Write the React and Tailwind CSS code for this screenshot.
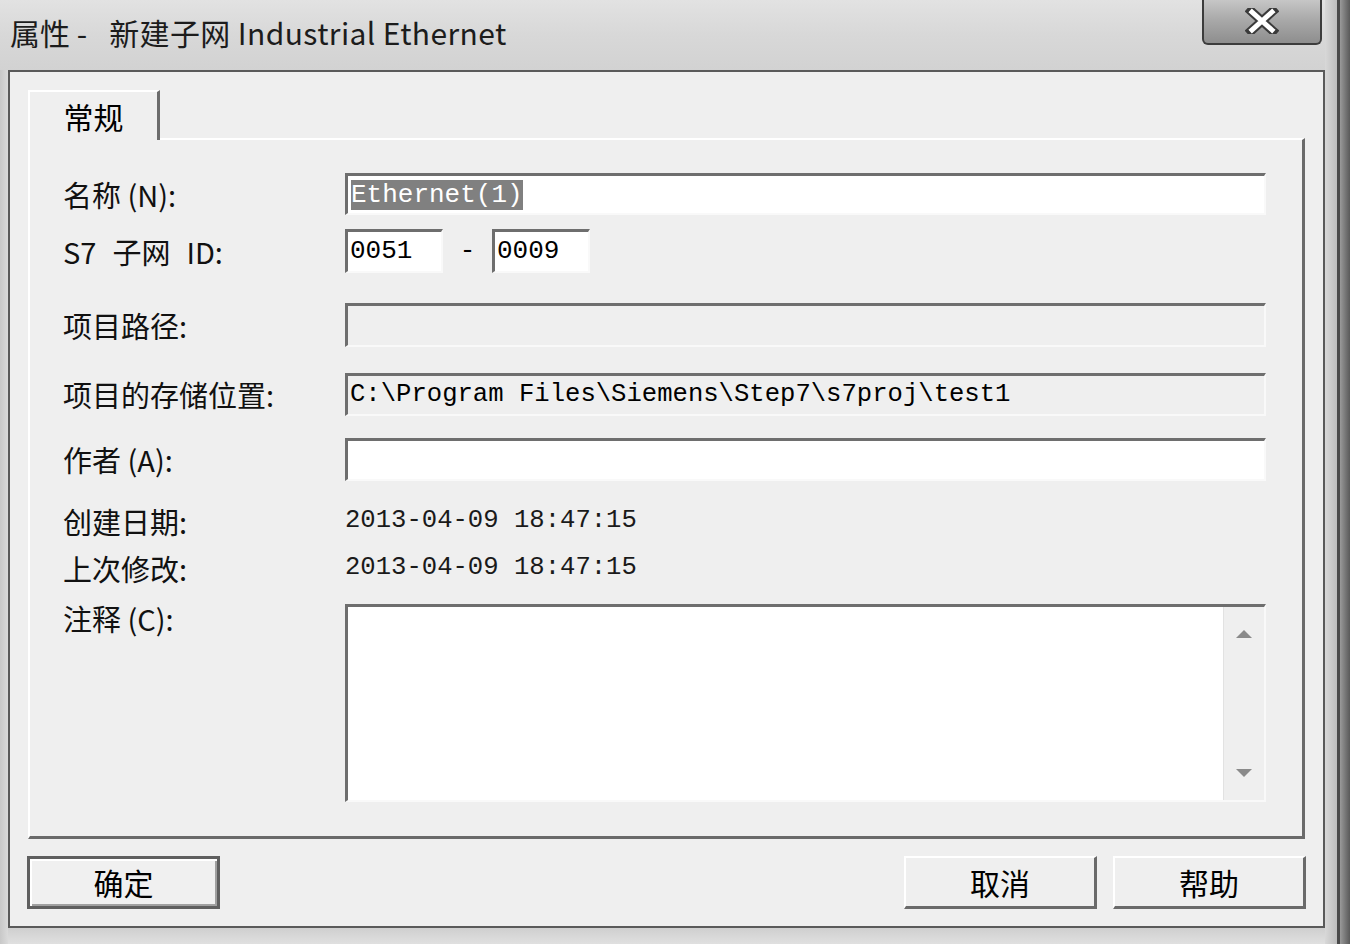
const cjk = "font-['Noto_Sans_CJK_SC','Noto_Sans',sans-serif]";
const mono = "font-['Liberation_Mono','DejaVu_Sans_Mono',monospace]";

function Sunken({ className = "", children }) {
  return (
    <div
      className={`border-t-[3px] border-l-[3px] border-t-[#6e6e6e] border-l-[#6e6e6e] border-b-2 border-r-2 border-b-[#f9f9f9] border-r-[#f9f9f9] ${className}`}
    >
      {children}
    </div>
  );
}

function Row({ label, className = "", children, top = "items-center" }) {
  return (
    <div className={`flex ${top} ${className}`}>
      <div className={`w-[282px] shrink-0 text-[29px] leading-none text-[#111] ${cjk}`}>{label}</div>
      <div className="flex-1 h-full">{children}</div>
    </div>
  );
}

function Button({ label, primary }) {
  const cls = primary
    ? "border-[3px] border-[#5f5f5f] bg-[#f0f0f0] shadow-[inset_2px_2px_0_#ffffff,inset_-2px_-2px_0_#a0a0a0]"
    : "border-t-2 border-l-2 border-t-[#ffffff] border-l-[#ffffff] border-b-[3px] border-r-[3px] border-b-[#6a6a6a] border-r-[#6a6a6a] bg-[#efefef]";
  return (
    <div className={`w-[193px] h-[53px] flex items-center justify-center text-[30px] text-black ${cjk} ${cls}`}>
      {label}
    </div>
  );
}

export default function App() {
  return (
    <div className="w-[1350px] h-[944px] overflow-hidden flex bg-[#d6d6d6]">
      <div className="w-[1325px] flex flex-col">
        {/* title bar */}
        <div className="h-[70px] flex items-start bg-gradient-to-b from-[#e2e2e2] via-[#d8d8d8] to-[#d2d2d2]">
          <div className={`pl-[10px] pt-[12px] text-[30px] leading-[40px] text-[#1c1c1c] flex ${cjk}`}>
            <span>属性 -</span>
            <span className="ml-[22px] tracking-[0.4px]">新建子网 Industrial Ethernet</span>
          </div>
          <div className="ml-auto mr-[3px] mt-[-2px] w-[120px] h-[47px] rounded-b-[6px] border-2 border-t-0 border-[#3c3c3c] bg-gradient-to-b from-[#c9c9c9] via-[#a8a8a8] to-[#8e8e8e] flex items-center justify-center">
            <svg width="34" height="26" viewBox="0 0 34 26">
              <path d="M6 3 L28 23 M28 3 L6 23" stroke="#3a3a3a" strokeWidth="9" strokeLinecap="square" />
              <path d="M7 4 L27 22 M27 4 L7 22" stroke="#ffffff" strokeWidth="5" strokeLinecap="square" />
            </svg>
          </div>
        </div>

        <div className="flex flex-1">
          <div className="w-[8px] bg-gradient-to-r from-[#c8c8c8] to-[#dadada]" />
          <div className="flex flex-col">
            {/* client area */}
            <div className="w-[1317px] h-[858px] border-t-2 border-l-2 border-r-2 border-b-2 border-[#5a5a5a] bg-[#efefef] pl-[18px] pt-[18px]">
              {/* tab */}
              <div
                className={`relative z-10 -mb-[2px] w-[132px] h-[50px] bg-[#efefef] border-t-2 border-l-2 border-[#ffffff] border-r-[3px] border-r-[#6c6c6c] flex items-start justify-center pt-[2px] text-[30px] text-black ${cjk}`}
              >
                常规
              </div>
              {/* tab panel */}
              <div className="w-[1277px] h-[701px] border-t-2 border-l-2 border-[#ffffff] border-r-[3px] border-r-[#6a6a6a] border-b-[3px] border-b-[#6a6a6a] pl-[33px] pr-[36px] flex flex-col">
                <Row label="名称 (N):" className="mt-[33px] h-[42px]">
                  <Sunken className="h-full bg-white flex items-center pl-[3px]">
                    <span className={`bg-[#808080] text-white text-[26px] leading-[30px] ${mono}`}>Ethernet(1)</span>
                  </Sunken>
                </Row>
                <Row
                  label={
                    <span className="flex gap-[16px]">
                      <span>S7</span>
                      <span>子网</span>
                      <span>ID:</span>
                    </span>
                  }
                  className="mt-[14px] h-[44px]"
                >
                  <div className="flex items-center h-full">
                    <Sunken className="w-[98px] h-full bg-white flex items-center pl-[2px]">
                      <span className={`text-[26px] text-black ${mono}`}>0051</span>
                    </Sunken>
                    <span className={`w-[49px] text-center text-[26px] text-black ${mono}`}>-</span>
                    <Sunken className="w-[98px] h-full bg-white flex items-center pl-[2px]">
                      <span className={`text-[26px] text-black ${mono}`}>0009</span>
                    </Sunken>
                  </div>
                </Row>
                <Row label="项目路径:" className="mt-[30px] h-[44px]">
                  <Sunken className="h-full bg-[#efefef]" />
                </Row>
                <Row label="项目的存储位置:" className="mt-[26px] h-[43px]">
                  <Sunken className="h-full bg-[#efefef] flex items-center pl-[2px]">
                    <span className={`text-[25.6px] text-black ${mono}`}>C:\Program Files\Siemens\Step7\s7proj\test1</span>
                  </Sunken>
                </Row>
                <Row label="作者 (A):" className="mt-[22px] h-[43px]">
                  <Sunken className="h-full bg-white" />
                </Row>
                <Row label="创建日期:" className="mt-[20px] h-[40px]">
                  <div className={`h-full flex items-center text-[25.6px] text-[#1a1a1a] ${mono}`}>2013-04-09 18:47:15</div>
                </Row>
                <Row label="上次修改:" className="mt-[7px] h-[40px]">
                  <div className={`h-full flex items-center text-[25.6px] text-[#1a1a1a] ${mono}`}>2013-04-09 18:47:15</div>
                </Row>
                <Row label="注释 (C):" className="mt-[16px] h-[198px]" top="items-start">
                  <Sunken className="h-full bg-white flex justify-end">
                    <div className="w-[41px] h-full bg-[#efefef] border-l border-[#e2e2e2] flex flex-col items-center justify-between py-[22px]">
                      <svg width="18" height="10" viewBox="0 0 18 10">
                        <path d="M9 1 L17 9 L1 9 Z" fill="#8a8a8a" />
                      </svg>
                      <svg width="18" height="10" viewBox="0 0 18 10">
                        <path d="M1 1 L17 1 L9 9 Z" fill="#8a8a8a" />
                      </svg>
                    </div>
                  </Sunken>
                </Row>
              </div>
              {/* buttons */}
              <div className="mt-[17px] flex w-[1279px] -ml-[1px]">
                <Button label="确定" primary />
                <div className="flex-1" />
                <Button label="取消" />
                <div className="w-[16px]" />
                <Button label="帮助" />
              </div>
            </div>
            <div className="flex-1 bg-gradient-to-b from-[#cfcfcf] to-[#e0e0e0]" />
          </div>
        </div>
      </div>
      {/* right frame */}
      <div className="w-[25px] flex">
        <div className="w-[12px] bg-gradient-to-r from-[#d8d8d8] to-[#bdbdbd]" />
        <div className="w-[3px] bg-[#4a4a4a]" />
        <div className="flex-1 bg-gradient-to-r from-[#9a9a9a] to-[#5a5a5a]" />
      </div>
    </div>
  );
}
